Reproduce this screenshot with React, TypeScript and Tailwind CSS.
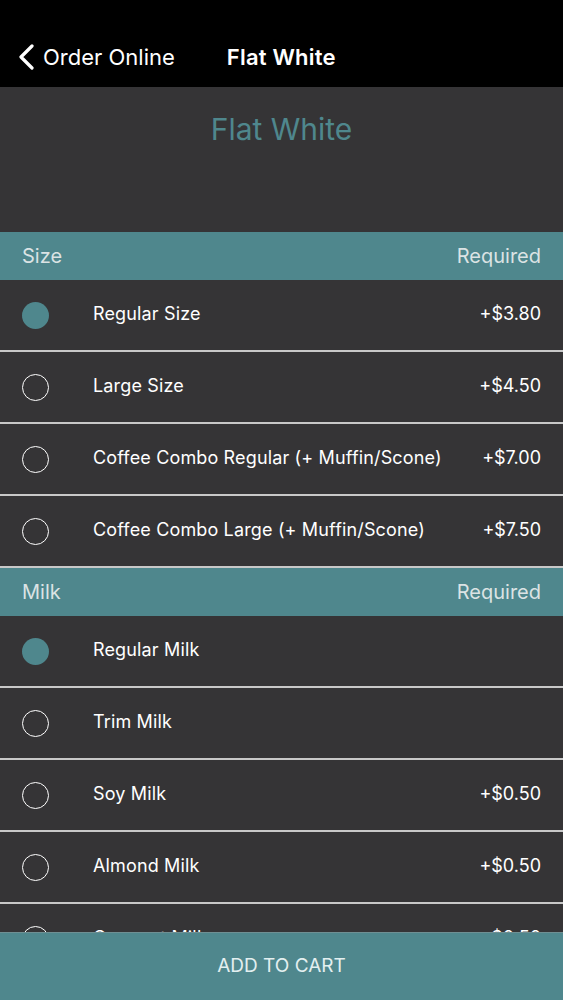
import React from "react";

type Opt = { name: string; price?: string; selected?: boolean };

const sections: { title: string; options: Opt[] }[] = [
  {
    title: "Size",
    options: [
      { name: "Regular Size", price: "+$3.80", selected: true },
      { name: "Large Size", price: "+$4.50" },
      { name: "Coffee Combo Regular (+ Muffin/Scone)", price: "+$7.00" },
      { name: "Coffee Combo Large (+ Muffin/Scone)", price: "+$7.50" },
    ],
  },
  {
    title: "Milk",
    options: [
      { name: "Regular Milk", selected: true },
      { name: "Trim Milk" },
      { name: "Soy Milk", price: "+$0.50" },
      { name: "Almond Milk", price: "+$0.50" },
      { name: "Coconut Milk", price: "+$0.50" },
    ],
  },
];

function Radio({ selected }: { selected?: boolean }) {
  return selected ? (
    <div className="w-[27px] h-[27px] rounded-full bg-[#4f878d] shrink-0" />
  ) : (
    <div className="w-[27px] h-[27px] rounded-full border-[1.5px] border-white shrink-0" />
  );
}

export default function App() {
  return (
    <div
      className="min-h-screen bg-[#353436] pb-[80px]"
      style={{ fontFamily: "Inter, 'Noto Sans', sans-serif" }}
    >
      <div className="h-[87px] bg-black flex items-center pt-[26px]">
        <div className="flex items-center pl-[17px]">
          <svg width="18" height="26" viewBox="0 0 18 26" className="mr-[8px]">
            <path
              d="M15 2 L4 13 L15 24"
              stroke="white"
              strokeWidth="3.2"
              fill="none"
              strokeLinecap="round"
              strokeLinejoin="round"
            />
          </svg>
          <span className="text-white text-[22px] leading-[24px]">Order Online</span>
        </div>
        <span className="text-white text-[22px] leading-[24px] font-semibold ml-[52px] tracking-[0.2px]">
          Flat White
        </span>
      </div>
      <div className="h-[145px] pt-[24px]">
        <div className="text-center text-[30px] leading-[36px] text-[#4f878d]">Flat White</div>
      </div>
      {sections.map((s) => (
        <div key={s.title}>
          <div className="h-[48px] bg-[#4f878d] flex items-center justify-between px-[22px] text-[20px] text-[#dbe3e4]">
            <span>{s.title}</span>
            <span>Required</span>
          </div>
          {s.options.map((o) => (
            <div
              key={o.name}
              className="h-[72px] border-b-2 border-[#c8c8c8] flex items-center pl-[22px] pr-[22px]"
            >
              <Radio selected={o.selected} />
              <span className="ml-[44px] mb-[4px] text-[18px] text-white flex-1 tracking-[0.15px]">{o.name}</span>
              {o.price && <span className="mb-[4px] text-[18px] text-white">{o.price}</span>}
            </div>
          ))}
        </div>
      ))}
      <div className="fixed bottom-0 left-0 right-0 h-[68px] bg-[#4f878d] border-t border-[#6f8f93] flex items-center justify-center">
        <span className="text-[19px] text-[#e3eff0]">ADD TO CART</span>
      </div>
    </div>
  );
}
